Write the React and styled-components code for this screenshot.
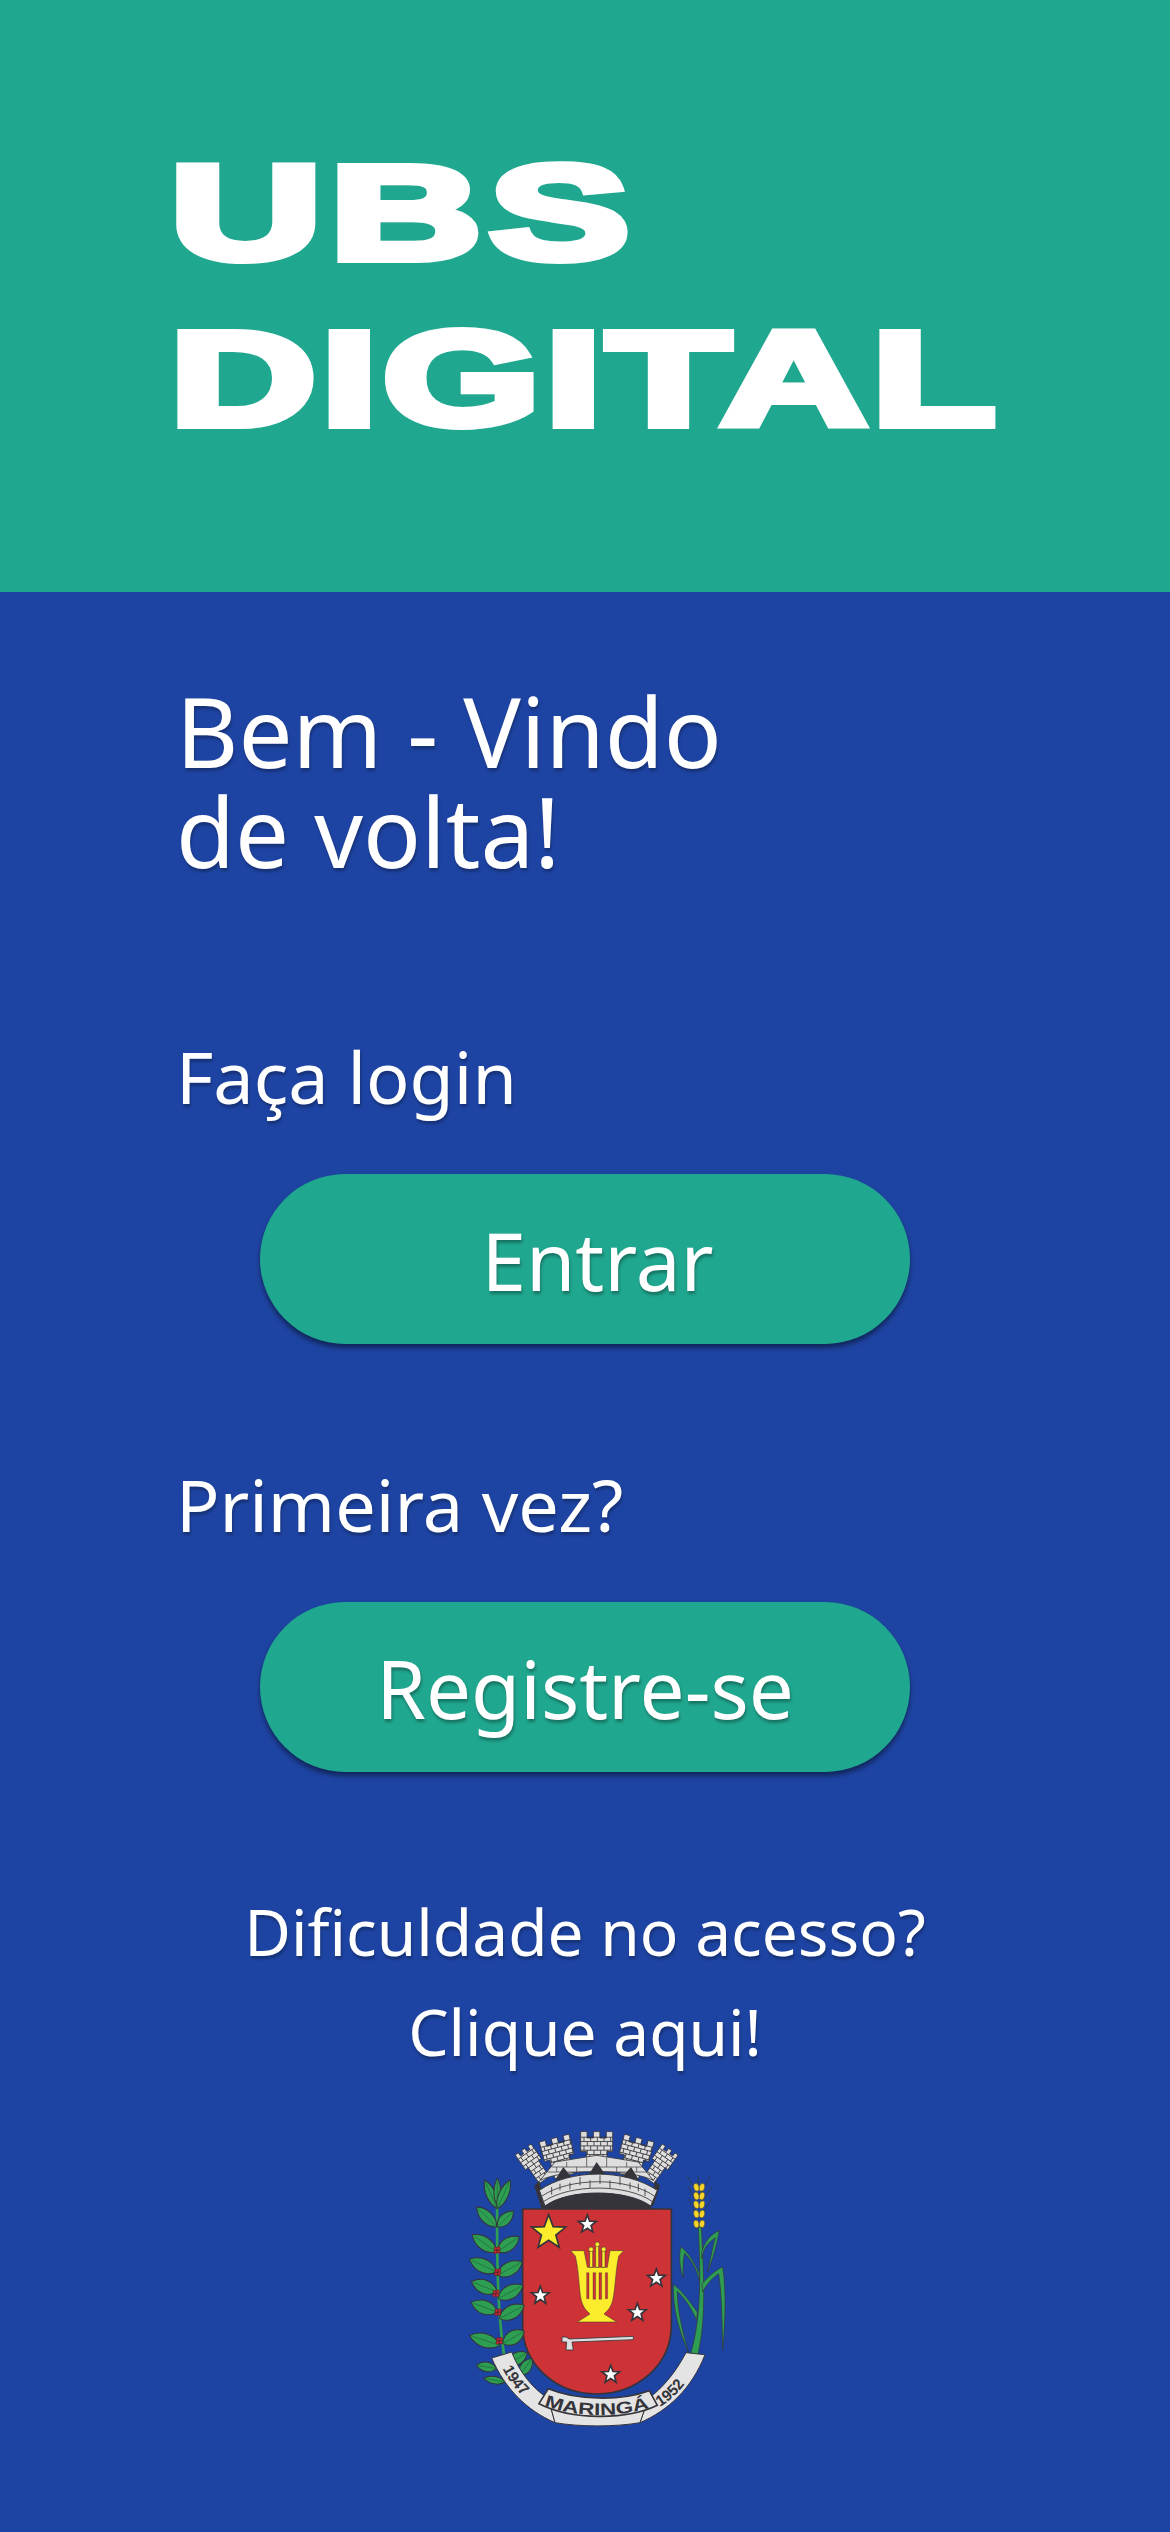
import React from "react";
import styled, { createGlobalStyle } from "styled-components";

const GlobalStyle = createGlobalStyle`
  html, body {
    margin: 0;
    padding: 0;
    background: #1e44a3;
  }
`;

const Page = styled.div`
  width: 1170px;
  height: 2532px;
  overflow: hidden;
  background: #1e44a3;
  color: #fff;
  font-family: "Noto Sans", sans-serif;
`;

// Green band with the wordmark
const Header = styled.header`
  height: 592px;
  box-sizing: border-box;
  padding: 152px 0 0 170px;
  background: #20a78f;
  display: flex;
  flex-direction: column;
  gap: 44px;
`;

const LogoLine = styled.div`
  font-family: "Liberation Sans", Arial, sans-serif;
  font-weight: 700;
  font-size: 133px;
  line-height: 122px;
  height: 122px;
  white-space: nowrap;
  letter-spacing: ${(p) => p.$track}px;
  -webkit-text-stroke: 8px #fff;
  transform-origin: left center;
  transform: scaleX(${(p) => p.$stretch});
`;

const Content = styled.main`
  padding: 89px 0 0 176px;
`;

const Title = styled.h1`
  margin: 0;
  font-size: 96px;
  font-weight: 400;
  line-height: 100px;
  text-shadow: 1px 3px 3px rgba(0, 0, 0, 0.28);
`;

const Section = styled.section`
  margin-top: ${(p) => p.$top}px;
`;

const Label = styled.p`
  margin: 0;
  font-size: 72px;
  line-height: 100px;
  text-shadow: 1px 3px 3px rgba(0, 0, 0, 0.28);
`;

const Button = styled.button`
  display: block;
  width: 650px;
  height: 170px;
  margin: 48px 0 0 84px;
  padding: 0 0 0 ${(p) => p.$shift || 0}px;
  border: none;
  border-radius: 85px;
  background: #20a78f;
  color: #fff;
  font-family: inherit;
  font-size: 80px;
  text-shadow: 1px 3px 3px rgba(0, 0, 0, 0.3);
  box-shadow: 0 4px 5px rgba(0, 0, 0, 0.45);
`;

const Help = styled.p`
  margin: 110px 0 0 -176px;
  text-align: center;
  font-size: 64px;
  line-height: 100px;
  text-shadow: 1px 3px 3px rgba(0, 0, 0, 0.28);
`;

const CrestWrap = styled.div`
  display: flex;
  justify-content: center;
  margin: 30px 0 0 -166px;
`;

const INK = "#34343a";
const GRAY = "#dedede";
const GREEN = "#2e9e52";

const Star = ({ x, y, r, fill = "#fff" }) => {
  const pts = [];
  for (let i = 0; i < 10; i++) {
    const rad = i % 2 ? r * 0.42 : r;
    const a = -Math.PI / 2 + (i * Math.PI) / 5;
    pts.push(`${(x + rad * Math.cos(a)).toFixed(1)},${(y + rad * Math.sin(a)).toFixed(1)}`);
  }
  return <polygon points={pts.join(" ")} fill={fill} stroke={INK} strokeWidth="5" />;
};

// Single coffee leaf, pointing up from its origin
const Leaf = ({ x, y, angle, len = 80, wide = 24 }) => (
  <g transform={`translate(${x} ${y}) rotate(${angle})`}>
    <path
      d={`M0 0 C${-wide * 1.35} ${-len * 0.25} ${-wide * 1.35} ${-len * 0.7} 0 ${-len} C${wide * 1.35} ${-len * 0.7} ${wide * 1.35} ${-len * 0.25} 0 0Z`}
      fill={GREEN}
      stroke={INK}
      strokeWidth="3"
    />
    <path d={`M0 0V${-len * 0.9}`} stroke="#1c6b38" strokeWidth="2" />
  </g>
);

const Berries = ({ x, y }) => (
  <g fill="#c22a36" stroke="#5a1518" strokeWidth="1.5">
    <circle cx={x} cy={y} r="5" />
    <circle cx={x + 9} cy={y - 1} r="5" />
    <circle cx={x + 1} cy={y - 10} r="5" />
    <circle cx={x + 10} cy={y - 11} r="5" />
  </g>
);

// One brick tower of the crown: toothed head on a narrower body
const Tower = ({ x, y, w, h, angle }) => {
  const tooth = w / 5;
  const head = h * 0.42;
  const lines = [];
  for (let row = 1; row * 13 < h; row++) {
    const ry = row * 13 - tooth * 0.8;
    const half = ry < head ? w / 2 : w * 0.32;
    lines.push(`M${-half} ${ry}H${half}`);
    for (let cx = -half + (row % 2 ? 10 : 20); cx < half; cx += 20) {
      lines.push(`M${cx} ${ry}v13`);
    }
  }
  return (
    <g transform={`translate(${x} ${y}) rotate(${angle})`} stroke={INK} strokeWidth="2.5" fill={GRAY}>
      <path
        d={`M${-w / 2} ${-tooth}h${tooth}v${tooth}h${tooth}v${-tooth}h${tooth}v${tooth}h${tooth}v${-tooth}h${tooth}V${head}H${w * 0.32}V${h}H${-w * 0.32}V${head}H${-w / 2}Z`}
      />
      <path d={lines.join(" ")} fill="none" />
    </g>
  );
};

const Crest = () => (
  <svg width="300" height="330" viewBox="0 0 900 990" aria-label="Brasão de Maringá">
    {/* crown */}
    <Tower x={256} y={122} w={58} h={100} angle={-35} />
    <Tower x={347} y={96} w={92} h={100} angle={-15} />
    <Tower x={470} y={78} w={96} h={96} angle={0} />
    <Tower x={593} y={96} w={92} h={100} angle={15} />
    <Tower x={684} y={122} w={58} h={100} angle={35} />
    <path
      d="M300 205 L345 150 L470 130 L595 150 L640 205 C570 170 370 170 300 205Z"
      fill={GRAY}
      stroke={INK}
      strokeWidth="2.5"
    />
    <path
      d="M335 165 H610 M322 180 H622 M380 150 V165 M440 136 V165 M500 136 V165 M560 150 V165 M350 165 V180 M410 165 V180 M530 165 V180 M590 165 V180"
      fill="none"
      stroke={INK}
      strokeWidth="2"
    />
    <path d="M345 205 L370 165 L395 197Z M445 190 L470 150 L497 190Z M545 197 L573 165 L597 205Z" fill={INK} />
    <path d="M283 222 L298 205 L315 282 L640 282 L660 222 L645 205 L632 292 H305Z" fill={INK} />
    <path
      d="M298 235 C390 170 555 170 652 235 L632 282 C560 230 385 230 315 282Z"
      fill={GRAY}
      stroke={INK}
      strokeWidth="3"
    />
    <path
      d="M306 252 C390 195 560 195 643 252 M312 268 C390 215 560 215 636 268 M360 215V235 M420 195V220 M480 190V216 M540 195V220 M595 215V238 M335 225V248 M390 212V232 M450 205V228 M510 205V228 M570 212V232 M615 230V252"
      fill="none"
      stroke={INK}
      strokeWidth="2.5"
    />
    <path d="M315 282 C385 230 560 230 632 282 L640 292 H305Z" fill={INK} />

    {/* shield */}
    <path
      d="M248 291 H694 V640 C694 760 590 846 470 846 C350 846 248 760 248 640Z"
      fill="#cc3236"
      stroke={INK}
      strokeWidth="5"
    />
    <Star x={326} y={362} r={54} fill="#fcec2b" />
    <Star x={442} y={337} r={28} />
    <Star x={649} y={499} r={28} />
    <Star x={301} y={551} r={28} />
    <Star x={592} y={602} r={28} />
    <Star x={512} y={788} r={28} />

    {/* lyre */}
    <g stroke={INK} strokeWidth="1.5" fill="#fcec2b">
      <path d="M392 416 H432 L442 466 H502 L510 416 H551 L536 432 C526 480 526 530 518 565 C512 590 498 600 492 606 L530 630 H412 L450 606 C444 600 430 590 424 565 C416 530 418 480 406 432Z" />
      <path d="M449 408 h9 V466 h-9Z M467 394 h9 V466 h-9Z M486 408 h9 V466 h-9Z" />
      <circle cx="453" cy="412" r="7" />
      <circle cx="472" cy="397" r="7" />
      <circle cx="491" cy="412" r="7" />
    </g>
    <path
      d="M440 482 h7 V560 h-7Z M459 482 h8 V562 h-8Z M477 482 h8 V562 h-8Z M496 482 h7 V560 h-7Z"
      fill="#cc3236"
      stroke={INK}
      strokeWidth="1"
    />

    {/* hoe */}
    <path
      d="M366 675 H378 L388 681 L580 673 V683 L396 690 L400 714 H378 L380 690 L366 690Z"
      fill={GRAY}
      stroke={INK}
      strokeWidth="2.5"
    />

    {/* coffee branch */}
    <path d="M172 220 C170 400 170 600 195 745" fill="none" stroke={GREEN} strokeWidth="8" />
    <Leaf x={172} y={290} angle={-24} len={94} wide={14} />
    <Leaf x={172} y={280} angle={0} len={82} wide={10} />
    <Leaf x={172} y={290} angle={24} len={94} wide={14} />
    <Leaf x={170} y={345} angle={-45} len={85} wide={17} />
    <Leaf x={172} y={345} angle={45} len={68} wide={16} />
    <Leaf x={170} y={420} angle={-55} len={90} wide={19} />
    <Leaf x={172} y={420} angle={55} len={80} wide={19} />
    <Leaf x={170} y={480} angle={-65} len={90} wide={20} />
    <Leaf x={172} y={490} angle={62} len={85} wide={20} />
    <Leaf x={172} y={540} angle={-68} len={84} wide={20} />
    <Leaf x={174} y={560} angle={62} len={85} wide={20} />
    <Leaf x={172} y={600} angle={-70} len={84} wide={20} />
    <Leaf x={178} y={620} angle={62} len={85} wide={20} />
    <Leaf x={180} y={700} angle={-72} len={96} wide={20} />
    <Leaf x={188} y={695} angle={60} len={75} wide={20} />
    <Leaf x={205} y={755} angle={60} len={65} wide={18} />
    <Leaf x={170} y={770} angle={-80} len={62} wide={14} />
    <Leaf x={195} y={810} angle={-80} len={65} wide={11} />
    <Leaf x={240} y={790} angle={35} len={62} wide={16} />
    <Berries x={166} y={420} />
    <Berries x={168} y={486} />
    <Berries x={163} y={550} />
    <Berries x={169} y={606} />
    <Berries x={173} y={692} />

    {/* cane and wheat */}
    <g fill="none" stroke={INK} strokeWidth="2">
      <path d="M740 190 L775 245 M810 195 L780 245 M745 225 L775 280 M815 225 L780 280 M745 260 L775 315 M815 260 L780 315 M775 190 V230" />
    </g>
    <g fill="#f7d52a" stroke={INK} strokeWidth="1.5">
      {[226, 252, 278, 306, 336].map((y) => (
        <g key={y}>
          <ellipse cx="769" cy={y} rx="8" ry="12" transform={`rotate(-15 769 ${y})`} />
          <ellipse cx="786" cy={y} rx="8" ry="12" transform={`rotate(15 786 ${y})`} />
        </g>
      ))}
    </g>
    <g fill={GREEN} stroke={INK} strokeWidth="2">
      <path d="M775 345 C782 500 785 640 742 755 L768 750 C800 640 792 500 784 345Z" />
      <path d="M785 420 C795 385 815 365 838 356 C830 400 818 445 802 480 C815 430 818 400 826 378 C805 390 790 410 785 440Z" />
      <path d="M778 485 C760 445 740 415 722 405 C716 440 720 470 730 497 C728 460 730 440 734 424 C752 442 770 470 778 505Z" />
      <path d="M786 515 C805 495 825 475 848 465 C860 540 855 640 848 715 C846 640 846 550 836 485 C820 495 800 515 788 540Z" />
      <path d="M772 600 C750 570 725 535 700 517 C698 590 718 660 745 720 C725 650 712 590 712 538 C735 560 755 590 770 625Z" />
    </g>

    {/* ribbon */}
    <g fill="#e4e4e4" stroke={INK} strokeWidth="3">
      <path d="M155 738 L215 720 C240 785 280 830 325 860 L345 932 C260 895 195 830 155 738Z" />
      <path d="M795 728 L738 722 C705 785 665 830 625 860 L600 932 C685 895 755 830 795 728Z" />
      <path d="M345 932 C420 945 525 945 600 932 L625 860 L325 860Z" />
      <path d="M325 830 C410 865 540 868 628 836 L652 880 C560 925 395 925 297 875Z" strokeWidth="5" />
    </g>
    <defs>
      <path id="ribbon-left" d="M188 770 C210 815 240 850 280 878" />
      <path id="ribbon-mid" d="M312 880 C410 918 540 918 640 884" />
      <path id="ribbon-right" d="M660 885 C700 860 735 825 758 775" />
    </defs>
    <g fontFamily="'Liberation Sans', Arial, sans-serif" fontWeight="700" fill={INK}>
      <text fontSize="46">
        <textPath href="#ribbon-left">1947</textPath>
      </text>
      <text fontSize="50">
        <textPath href="#ribbon-mid" textLength="322" lengthAdjust="spacingAndGlyphs">
          MARINGÁ
        </textPath>
      </text>
      <text fontSize="46">
        <textPath href="#ribbon-right">1952</textPath>
      </text>
    </g>
  </svg>
);

const App = () => (
  <Page>
    <GlobalStyle />
    <Header>
      <LogoLine $stretch={1.58} $track={5}>
        UBS
      </LogoLine>
      <LogoLine $stretch={1.52} $track={3.5}>
        DIGITAL
      </LogoLine>
    </Header>
    <Content>
      <Title>
        Bem - Vindo
        <br />
        de volta!
      </Title>
      <Section $top={145}>
        <Label>Faça login</Label>
        <Button $shift={25}>Entrar</Button>
      </Section>
      <Section $top={110}>
        <Label>Primeira vez?</Label>
        <Button>Registre-se</Button>
      </Section>
      <Help>
        Dificuldade no acesso?
        <br />
        Clique aqui!
      </Help>
      <CrestWrap>
        <Crest />
      </CrestWrap>
    </Content>
  </Page>
);

export default App;
